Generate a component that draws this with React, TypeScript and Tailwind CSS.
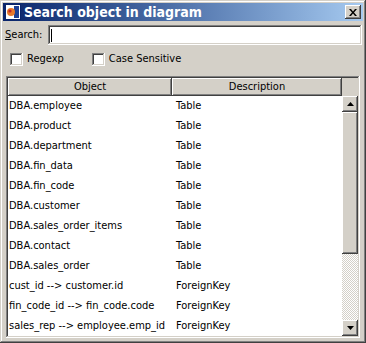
import React from 'react';

const raised =
  'shadow-[inset_-1px_-1px_#404040,inset_1px_1px_#ffffff,inset_-2px_-2px_#808080,inset_2px_2px_#d4d0c8]';
const sunken =
  'shadow-[inset_-1px_-1px_#ffffff,inset_1px_1px_#808080,inset_-2px_-2px_#d4d0c8,inset_2px_2px_#404040]';

const rows: [string, string][] = [
  ['DBA.employee', 'Table'],
  ['DBA.product', 'Table'],
  ['DBA.department', 'Table'],
  ['DBA.fin_data', 'Table'],
  ['DBA.fin_code', 'Table'],
  ['DBA.customer', 'Table'],
  ['DBA.sales_order_items', 'Table'],
  ['DBA.contact', 'Table'],
  ['DBA.sales_order', 'Table'],
  ['cust_id --> customer.id', 'ForeignKey'],
  ['fin_code_id --> fin_code.code', 'ForeignKey'],
  ['sales_rep --> employee.emp_id', 'ForeignKey'],
];

const AppIcon = () => (
  <svg width="16" height="16" viewBox="0 0 16 16">
    <rect x="0.5" y="0.5" width="15" height="15" fill="#ffffff" stroke="#0a246a" />
    <rect x="9" y="2" width="5" height="12" fill="#1c3f94" />
    <circle cx="6" cy="8" r="4" fill="#e8782a" />
    <circle cx="5" cy="7" r="1.6" fill="#c0262a" />
  </svg>
);

const Checkbox = ({ label }: { label: string }) => (
  <div className="flex items-center gap-[4px]">
    <div className={`w-[13px] h-[13px] bg-white ${sunken}`} />
    <span>{label}</span>
  </div>
);

export default function App() {
  return (
    <div
      className="w-[366px] h-[343px] bg-[#d4d0c8] p-[3px] flex flex-col text-[11px] text-black shadow-[inset_-1px_-1px_#404040,inset_1px_1px_#d4d0c8,inset_-2px_-2px_#808080,inset_2px_2px_#ffffff]"
      style={{ fontFamily: '"DejaVu Sans Condensed", "DejaVu Sans", sans-serif', fontStretch: 'condensed' }}
    >
      {/* title bar */}
      <div className="h-[18px] flex items-center pl-[2px] pr-[2px] bg-gradient-to-r from-[#0a246a] to-[#a6caf0]">
        <AppIcon />
        <span className="ml-[3px] text-white font-bold text-[14px] leading-none">Search object in diagram</span>
        <div className={`ml-auto w-[16px] h-[14px] bg-[#d4d0c8] flex items-center justify-center ${raised}`}>
          <svg width="8" height="7" viewBox="0 0 8 7">
            <path d="M0 0h2l2 2.5L6 0h2L5 3.5 8 7H6L4 4.5 2 7H0l3-3.5z" fill="#000" />
          </svg>
        </div>
      </div>

      {/* search row */}
      <div className="mt-[4px] flex items-center h-[20px] pl-[2px] pr-[1px]">
        <span className="w-[43px]">
          <span className="underline">S</span>earch:
        </span>
        <div className={`flex-1 h-[20px] bg-white flex items-center pl-[3px] ${sunken}`}>
          <div className="w-[1px] h-[13px] bg-black" />
        </div>
      </div>

      {/* options */}
      <div className="mt-[8px] h-[13px] flex items-center pl-[7px] gap-[28px]">
        <Checkbox label="Regexp" />
        <Checkbox label="Case Sensitive" />
      </div>

      {/* list */}
      <div className={`mt-[10px] mx-[3px] h-[262px] p-[2px] bg-[#d4d0c8] flex flex-col ${sunken}`}>
        <div className="h-[18px] flex">
          <div className={`w-[164px] flex items-center justify-center ${raised}`}>Object</div>
          <div className={`flex-1 flex items-center justify-center ${raised}`}>Description</div>
          <div className="w-[16px]" />
        </div>
        <div className="flex-1 flex min-h-0">
          <div className="flex-1 bg-white overflow-hidden">
            {rows.map(([obj, desc]) => (
              <div key={obj} className="h-[20px] flex items-center whitespace-nowrap">
                <span className="w-[164px] pl-[1px]">{obj}</span>
                <span className="pl-[4px]">{desc}</span>
              </div>
            ))}
          </div>
          <div className="w-[16px] flex flex-col">
            <div className={`h-[16px] bg-[#d4d0c8] flex items-center justify-center ${raised}`}>
              <svg width="7" height="4" viewBox="0 0 7 4">
                <path d="M3.5 0L7 4H0z" fill="#000" />
              </svg>
            </div>
            <div className={`h-[142px] bg-[#d4d0c8] ${raised}`} />
            <div className="flex-1 bg-[repeating-conic-gradient(#ffffff_0_25%,#d4d0c8_0_50%)] bg-[length:2px_2px]" />
            <div className={`h-[16px] bg-[#d4d0c8] flex items-center justify-center ${raised}`}>
              <svg width="7" height="4" viewBox="0 0 7 4">
                <path d="M0 0h7L3.5 4z" fill="#000" />
              </svg>
            </div>
          </div>
        </div>
      </div>
    </div>
  );
}
